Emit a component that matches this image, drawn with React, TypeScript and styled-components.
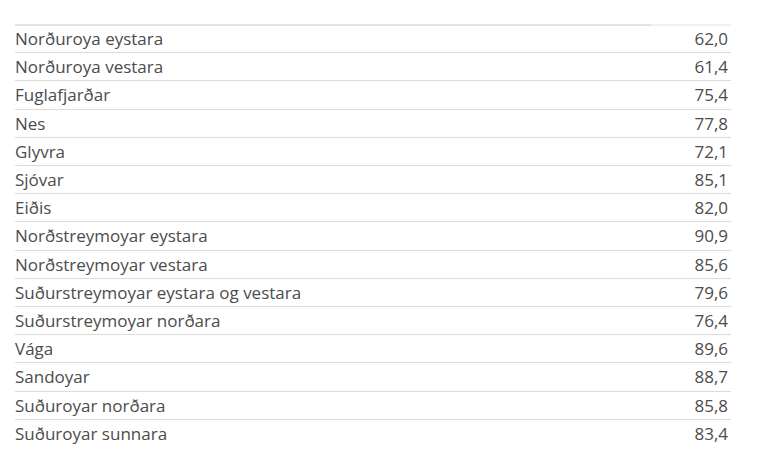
import React from "react";
import styled, { createGlobalStyle } from "styled-components";

const Global = createGlobalStyle`
  html, body { margin: 0; padding: 0; background: #ffffff; }
  body { font-family: "Open Sans", "Noto Sans", sans-serif; }
`;

const Page = styled.div`
  padding: 24px 0 0 15px;
  width: 716px;
`;

const Table = styled.div`
  display: flex;
  flex-direction: column;
  width: 716px;
`;

const HeaderRow = styled.div`
  display: grid;
  grid-template-columns: 636px 1fr;
  height: 0;
`;

const HeaderCell = styled.div<{ $shade: string }>`
  border-top: 2px solid ${(p) => p.$shade};
`;

const Row = styled.div<{ $last?: boolean }>`
  display: flex;
  justify-content: space-between;
  align-items: center;
  padding: 4px 3px 4px 0;
  font-size: 17px;
  line-height: 19.2px;
  color: #4c4c4c;
  border-bottom: ${(p) => (p.$last ? "none" : "1px solid #dcdcdc")};
  &:nth-child(2) { margin-top: 2px; padding-top: 3px; }
`;

const Name = styled.span``;
const Value = styled.span`
  text-align: right;
`;

const rows: [string, string][] = [
  ["Norðuroya eystara", "62,0"],
  ["Norðuroya vestara", "61,4"],
  ["Fuglafjarðar", "75,4"],
  ["Nes", "77,8"],
  ["Glyvra", "72,1"],
  ["Sjóvar", "85,1"],
  ["Eiðis", "82,0"],
  ["Norðstreymoyar eystara", "90,9"],
  ["Norðstreymoyar vestara", "85,6"],
  ["Suðurstreymoyar eystara og vestara", "79,6"],
  ["Suðurstreymoyar norðara", "76,4"],
  ["Vága", "89,6"],
  ["Sandoyar", "88,7"],
  ["Suðuroyar norðara", "85,8"],
  ["Suðuroyar sunnara", "83,4"],
];

export default function App() {
  return (
    <Page>
      <Global />
      <Table>
        <HeaderRow>
          <HeaderCell $shade="#e2e4e4" />
          <HeaderCell $shade="#f0f1f1" />
        </HeaderRow>
        {rows.map(([n, v], i) => (
          <Row key={n} $last={i === rows.length - 1}>
            <Name>{n}</Name>
            <Value>{v}</Value>
          </Row>
        ))}
      </Table>
    </Page>
  );
}
